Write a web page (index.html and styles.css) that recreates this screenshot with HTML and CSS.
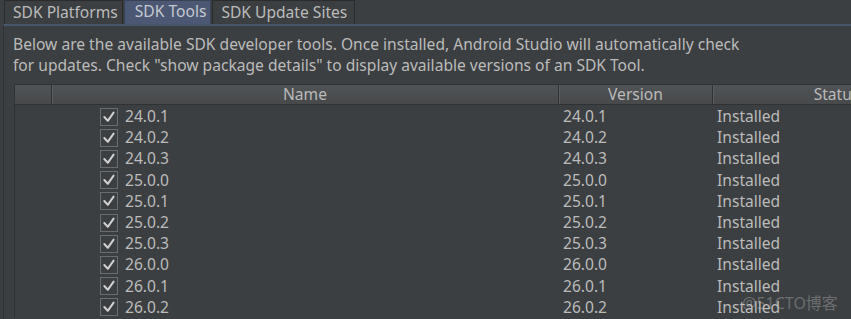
FILE: index.html
```html
<!DOCTYPE html>
<html>
<head>
<meta charset="utf-8">
<link rel="stylesheet" href="styles.css">
</head>
<body>
<div class="window">
  <div class="tabs">
    <div class="tab">SDK Platforms</div>
    <div class="tab active">SDK Tools</div>
    <div class="tab">SDK Update Sites</div>
  </div>
  <div class="panel">
    <p class="desc">Below are the available SDK developer tools. Once installed, Android Studio will automatically check<br>for updates. Check "show package details" to display available versions of an SDK Tool.</p>
    <div class="table">
      <div class="row head">
        <div class="cell c0"></div>
        <div class="cell c1">Name</div>
        <div class="cell c2">Version</div>
        <div class="cell c3">Status</div>
      </div>
      <div class="body" id="rows"></div>
    </div>
  </div>
</div>
<div class="watermark">@51CTO博客</div>
<script>
var v=["24.0.1","24.0.2","24.0.3","25.0.0","25.0.1","25.0.2","25.0.3","26.0.0","26.0.1","26.0.2"];
var h="";
v.forEach(function(x){
  h+='<div class="row item"><div class="cell c0"></div><div class="cell c1"><span class="check"><svg viewBox="0 0 18 18" width="18" height="18"><path d="M4.3 9 L7.8 12.8 L13.6 4.6" fill="none" stroke="#d0d0d0" stroke-width="2" stroke-linecap="round" stroke-linejoin="round"/></svg></span><span class="name">'+x+'</span></div><div class="cell c2">'+x+'</div><div class="cell c3">Installed</div></div>';
});
document.getElementById("rows").innerHTML=h;
</script>
</body>
</html>
```
FILE: styles.css
```css
html, body {
  margin: 0;
  padding: 0;
  background: #3c3f41;
  overflow: hidden;
  width: 851px;
  height: 319px;
}
body {
  font-family: "Noto Sans", "Open Sans", sans-serif;
  font-size: 15.6px;
  color: #bbbbbb;
  position: relative;
}
.window {
  padding-left: 4px;
}
.tabs {
  display: flex;
  height: 24px;
}
.tab {
  border: 1px solid #2b2b2b;
  border-bottom: none;
  padding: 0 4px 0 8px;
  line-height: 22px;
  height: 24px;
  box-sizing: border-box;
}
.tab + .tab {
  margin-left: 1px;
}
.tab:last-child {
  padding: 0 7px 0 8px;
}
.tab.active {
  background: #4c5873;
  color: #c4c8d0;
  line-height: 21px;
  padding: 0 4px 0 10px;
  border-color: #3a4256;
}
.panel {
  border-top: 2px solid #49546d;
  border-left: 1px solid #2f3133;
  margin-left: -1px;
  height: 300px;
}
.desc {
  margin: 0;
  padding: 8px 0 0 9px;
  line-height: 21px;
  height: 50px;
}
.table {
  margin-left: 10px;
  border-left: 1px solid #2f3133;
  width: 945px;
}
.row {
  display: grid;
  grid-template-columns: 36px 507px 154px 1fr;
}
.head {
  height: 21px;
  background: linear-gradient(#505355, #47494b);
  border-top: 1px solid #2f3133;
  border-bottom: 1px solid #2f3133;
  box-sizing: border-box;
}
.head .cell {
  text-align: center;
  line-height: 19px;
  border-left: 1px solid #2f3133;
  box-shadow: inset 1px 0 0 #5a5d60;
}
.head .c0 {
  border-left: none;
  box-shadow: none;
}
.body {
  padding-top: 1px;
}
.item {
  height: 21.2px;
  line-height: 21px;
}
.item .c1 {
  display: flex;
  align-items: center;
  padding-left: 49px;
}
.item .c2, .item .c3 {
  padding-left: 5px;
}
.check {
  width: 18px;
  height: 18px;
  border: 1px solid #6a6c6e;
  box-sizing: border-box;
  display: flex;
  align-items: center;
  justify-content: center;
  margin-right: 7px;
}
.check svg {
  display: block;
  flex: none;
}
.watermark {
  position: absolute;
  left: 742px;
  top: 290px;
  font-size: 16px;
  color: rgba(200, 200, 200, 0.35);
  font-family: "Noto Sans", "Noto Sans CJK SC", sans-serif;
}
```
